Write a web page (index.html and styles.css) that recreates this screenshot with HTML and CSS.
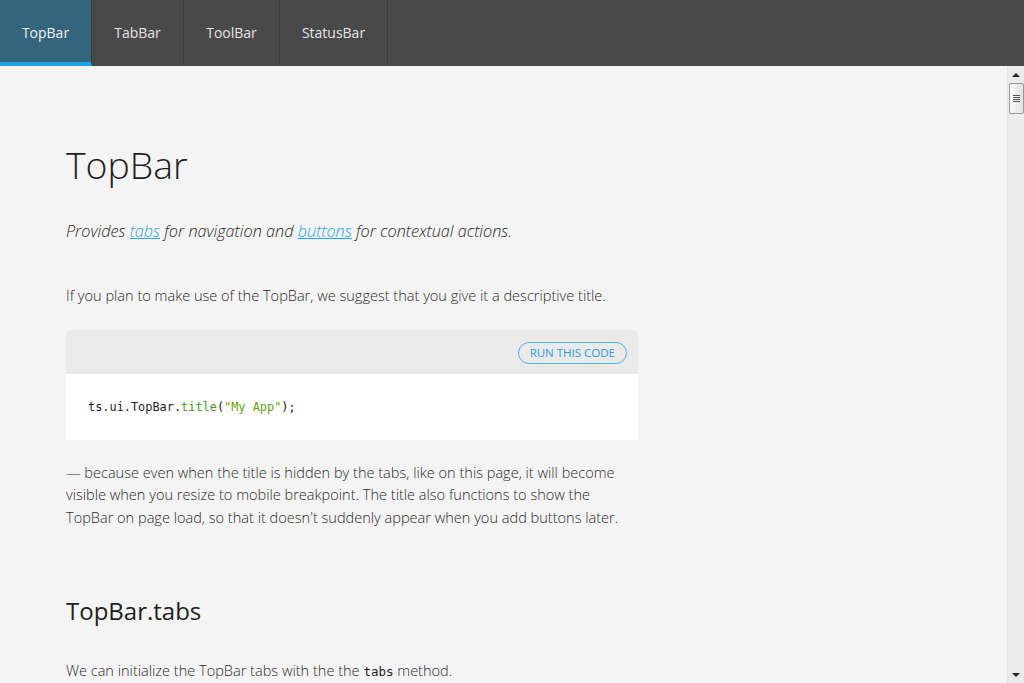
FILE: index.html
```html
<!DOCTYPE html>
<html>
<head>
<meta charset="utf-8">
<link rel="stylesheet" href="styles.css">
</head>
<body>
<header class="topbar">
  <nav class="tabs">
    <a class="tab active">TopBar</a>
    <a class="tab">TabBar</a>
    <a class="tab">ToolBar</a>
    <a class="tab">StatusBar</a>
  </nav>
</header>
<div class="viewport">
  <main class="content">
    <h1 class="title">TopBar</h1>
    <p class="lead">Provides <a class="link">tabs</a> for navigation and <a class="link">buttons</a> for contextual actions.</p>
    <p class="text first">If you plan to make use of the TopBar, we suggest that you give it a descriptive title.</p>
    <div class="codebox">
      <div class="codehead"><button class="runbtn">RUN THIS CODE</button></div>
      <pre class="code">ts.ui.TopBar.<span class="fn">title</span>(<span class="str">"My App"</span>);</pre>
    </div>
    <p class="text">— because even when the title is hidden by the tabs, like on this page, it will become visible when you resize to mobile breakpoint. The title also functions to show the TopBar on page load, so that it doesn't suddenly appear when you add buttons later.</p>
    <h2 class="subtitle">TopBar.tabs</h2>
    <p class="text">We can initialize the TopBar tabs with the the <code class="inline">tabs</code> method.</p>
  </main>
  <div class="scrollbar">
    <div class="arrow up"></div>
    <div class="thumb"><span></span><span></span><span></span><span></span></div>
    <div class="track"></div>
    <div class="arrow down"></div>
  </div>
</div>
</body>
</html>
```

FILE: styles.css
```css
html, body {
  margin: 0;
  padding: 0;
  height: 100%;
  overflow: hidden;
}
body {
  font-family: "Open Sans", "Liberation Sans", sans-serif;
  background: #f4f4f4;
  color: #2b2b2b;
  display: flex;
  flex-direction: column;
}
.topbar {
  height: 66px;
  background: #494949;
  flex: none;
}
.tabs {
  display: flex;
  height: 100%;
}
.tab {
  display: flex;
  align-items: center;
  justify-content: center;
  padding-top: 3px;
  color: #e4e4e4;
  font-size: 14px;
  font-weight: 400;
  border-right: 1px solid #3a3a3a;
  box-sizing: border-box;
  height: 66px;
  border-bottom: 4px solid transparent;
  flex: none;
  width: 92px;
}
.tab:nth-child(3) { width: 96px; }
.tab:nth-child(4) { width: 108px; }
.tab.active {
  background: #35657a;
  border-bottom-color: #1fa3e8;
  color: #f2f2f2;
}
.viewport {
  flex: 1;
  display: flex;
  min-height: 0;
}
.content {
  flex: 1;
  padding: 0 0 0 66px;
  overflow: hidden;
}
.content > * {
  width: 572px;
}
.title {
  font-weight: 300;
  font-size: 37.4px;
  color: #1e1e1e;
  margin: 74px 0 0 0;
  line-height: 50px;
}
.lead {
  font-style: italic;
  font-weight: 300;
  font-size: 16.25px;
  color: #2b2b2b;
  margin: 29px 0 0 0;
  line-height: 24px;
}
.link {
  color: #2aa3ea;
  text-decoration: underline;
}
.text {
  font-weight: 300;
  font-size: 14.55px;
  line-height: 22.5px;
  margin: 0;
  color: #2b2b2b;
}
.text.first {
  margin-top: 41px;
}
.codebox {
  margin: 23px 0 21px 0;
  border-radius: 3px;
  overflow: hidden;
}
.codehead {
  background: #eaeaea;
  height: 44px;
  display: flex;
  align-items: center;
  justify-content: flex-end;
  padding: 0 11px;
}
.runbtn {
  font-family: "Open Sans", "Liberation Sans", sans-serif;
  font-size: 11.5px;
  font-weight: 400;
  color: #2a9de0;
  background: transparent;
  border: 1px solid #4fb3ec;
  border-radius: 11px;
  height: 22px;
  padding: 0 11px;
  line-height: 20px;
  margin-top: 2px;
}
.code {
  background: #fff;
  margin: 0;
  height: 66px;
  padding: 0 22px;
  display: flex;
  align-items: center;
  font-family: "DejaVu Sans Mono", "Liberation Mono", monospace;
  font-size: 11.9px;
  color: #1e1e1e;
}
.fn { color: #4a9a2c; }
.str { color: #6a9e12; }
.subtitle {
  font-weight: 400;
  font-size: 24px;
  color: #1e1e1e;
  margin: 63px 0 0 0;
  line-height: 40px;
}
.subtitle + .text {
  margin-top: 28px;
}
.inline {
  font-family: "DejaVu Sans Mono", "Liberation Mono", monospace;
  font-size: 12.5px;
  font-weight: 400;
  color: #1e1e1e;
}
.scrollbar {
  width: 17px;
  flex: none;
  background: #ececec;
  border-left: 1px solid #e4e4e4;
  box-sizing: border-box;
  display: flex;
  flex-direction: column;
  align-items: center;
}
.arrow {
  height: 17px;
  width: 17px;
  display: flex;
  align-items: center;
  justify-content: center;
  flex: none;
}
.arrow::before {
  content: "";
  width: 0;
  height: 0;
  border-left: 4px solid transparent;
  border-right: 4px solid transparent;
}
.arrow.up::before { border-bottom: 4px solid #222; }
.arrow.down::before { border-top: 4px solid #222; }
.thumb {
  width: 15px;
  height: 31px;
  box-sizing: border-box;
  border: 1px solid #9a9a9a;
  border-radius: 2px;
  background: linear-gradient(to right, #f8f8f8, #e2e2e2);
  display: flex;
  flex-direction: column;
  align-items: center;
  justify-content: center;
  gap: 1px;
  flex: none;
}
.thumb span {
  width: 7px;
  height: 1px;
  background: #555;
}
.track { flex: 1; }
```
